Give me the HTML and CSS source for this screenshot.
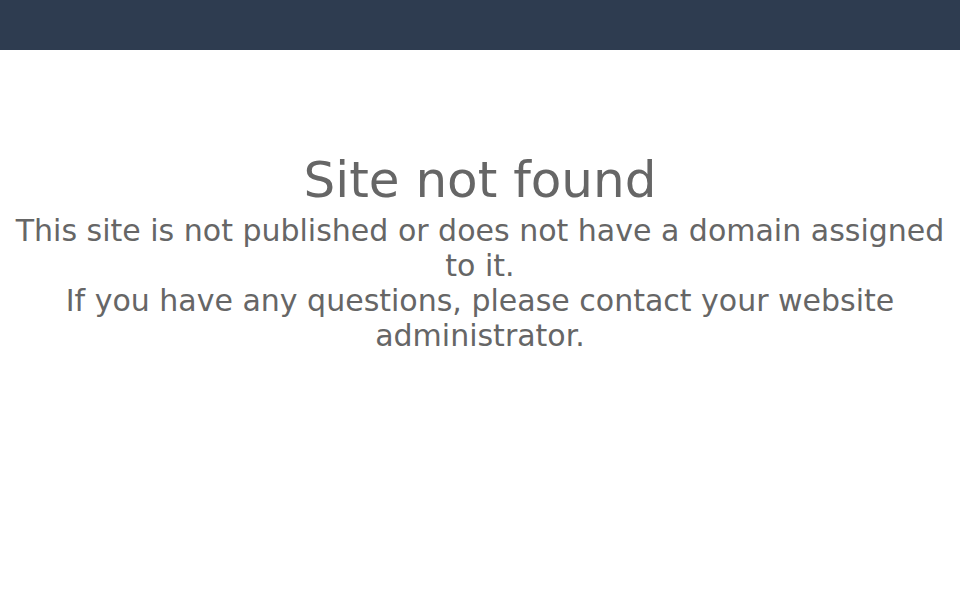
FILE: index.html
```html
<!DOCTYPE html>
<html>
<head>
<meta charset="utf-8">
<title>Site not found</title>
<link rel="stylesheet" href="styles.css">
</head>
<body>
<header class="topbar"></header>
<main class="content">
  <h1 class="title">Site not found</h1>
  <p class="message">This site is not published or does not have a domain assigned to it.</p>
  <p class="message">If you have any questions, please contact your website administrator.</p>
</main>
</body>
</html>
```
FILE: styles.css
```css
html, body {
  margin: 0;
  padding: 0;
  background: #ffffff;
}
body {
  font-family: "DejaVu Sans", Verdana, sans-serif;
  color: #666666;
}
.topbar {
  height: 50px;
  background: #2e3c50;
}
.content {
  padding-top: 100px;
  text-align: center;
}
.title {
  margin: 0 0 3px;
  font-size: 50px;
  font-weight: normal;
  line-height: 60px;
}
.message {
  margin: 0;
  font-size: 30px;
  line-height: 35px;
}
```
